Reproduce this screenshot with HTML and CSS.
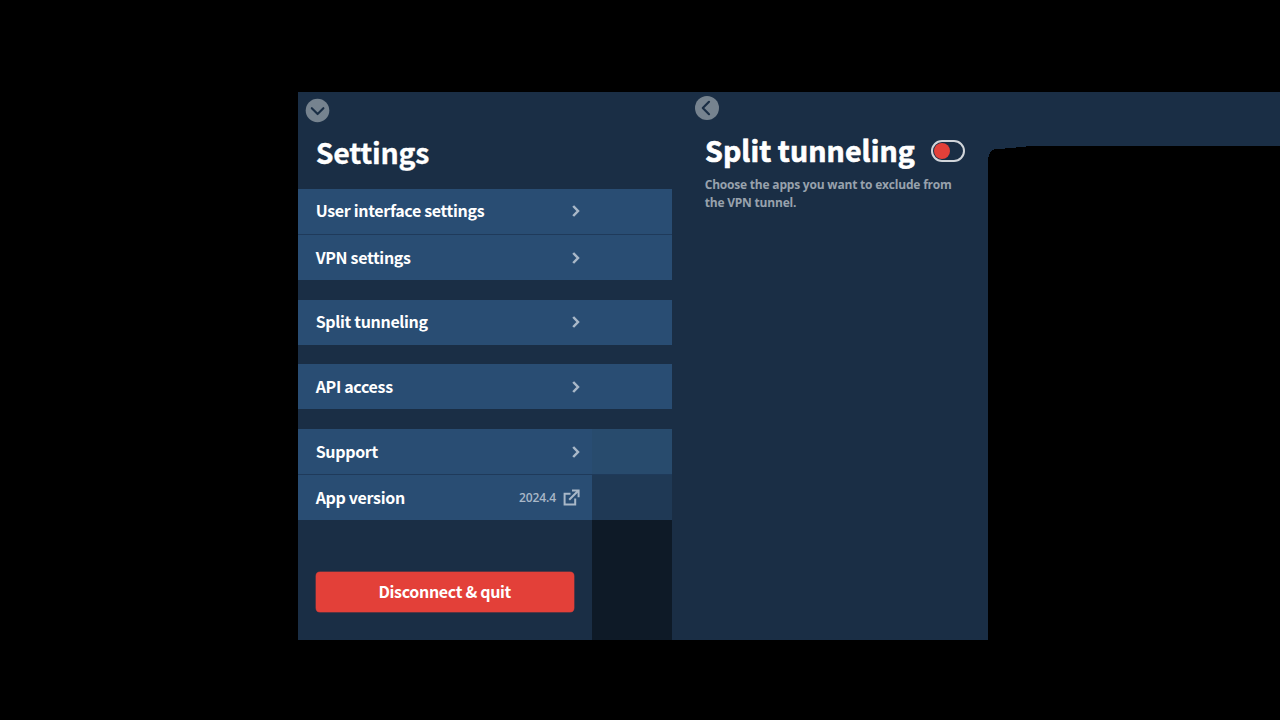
FILE: index.html
```html
<!DOCTYPE html>
<html lang="en">
<head>
<meta charset="utf-8">
<title>Settings</title>
<link rel="stylesheet" href="styles.css">
</head>
<body>
<main class="stage">
  <section class="settings">
    <header class="settings-header">
      <svg class="round-icon" width="25" height="25" viewBox="0 0 25 25"><circle cx="12.5" cy="12.5" r="11.8" fill="#76838f"/><path d="M6.8 10.2 12.6 16.1 18.4 10.2" fill="none" stroke="#1a2e45" stroke-width="2.1" stroke-linecap="round" stroke-linejoin="round"/></svg>
      <h1 class="title">Settings</h1>
    </header>
    <nav class="menu">
      <div class="group">
        <div class="row row-raised"><span class="label">User interface settings</span><svg class="chevron" viewBox="0 0 8 12"><path d="M1.2 1 6 6 1.2 11"/></svg></div>
        <div class="row"><span class="label">VPN settings</span><svg class="chevron" viewBox="0 0 8 12"><path d="M1.2 1 6 6 1.2 11"/></svg></div>
      </div>
      <div class="group">
        <div class="row row-raised"><span class="label">Split tunneling</span><svg class="chevron" viewBox="0 0 8 12"><path d="M1.2 1 6 6 1.2 11"/></svg></div>
      </div>
      <div class="group">
        <div class="row"><span class="label">API access</span><svg class="chevron" viewBox="0 0 8 12"><path d="M1.2 1 6 6 1.2 11"/></svg></div>
      </div>
      <div class="group">
        <div class="row row-support"><span class="label">Support</span><svg class="chevron" viewBox="0 0 8 12"><path d="M1.2 1 6 6 1.2 11"/></svg></div>
        <div class="row row-version"><span class="label">App version</span><span class="version">2024.4</span><svg class="external" width="17" height="17" viewBox="0 0 17 17"><path d="M7.5 4.7H1.6V15.4H12.2V9.5M6.2 10.8 14.2 2.8" fill="none" stroke="#a9b8c8" stroke-width="2"/><path d="M9 0.6H16.6V8.2H14.6V4L13 2.6H9Z" fill="#a9b8c8"/></svg></div>
      </div>
    </nav>
    <footer class="footer"><button class="quit">Disconnect &amp; quit</button></footer>
  </section>
  <section class="split">
    <svg class="round-icon" width="24" height="24" viewBox="0 0 24 24"><circle cx="12" cy="12" r="12" fill="#76838f"/><path d="M14 5.8 7.8 12 14 18.2" fill="none" stroke="#1a2e45" stroke-width="2.2" stroke-linecap="round" stroke-linejoin="round"/></svg>
    <div class="split-heading"><h2 class="title title-split">Split tunneling</h2><span class="toggle"><span class="knob"></span></span></div>
    <p class="description">Choose the apps you want to exclude from<br>the VPN tunnel.</p>
  </section>
  <svg class="band" width="292" height="70" viewBox="0 0 292 70"><path d="M0 0H292V54H38V55H28V56H17V57H6V58H4V59H3V60H2V62H1V65H0Z" fill="#1a2e45" shape-rendering="crispEdges"/></svg>
</main>
</body>
</html>
```
FILE: styles.css
```css
* { box-sizing: border-box; }
body { margin: 0; background: #000; color: #fff; font-family: "Noto Sans CJK SC", "Noto Sans", sans-serif; overflow: hidden; }
.stage { display: flex; width: 1280px; height: 720px; padding: 92px 0 80px 298px; }
.settings { display: flex; flex-direction: column; flex: none; width: 374px; height: 548px; background: #1a2e45; }
.settings-header { height: 97px; padding: 6px 0 0 7px; }
.round-icon { display: block; }
.title { margin: 6px 0 0 10.7px; font-size: 28.5px; line-height: 46px; font-weight: 700; letter-spacing: -0.25px; white-space: nowrap; -webkit-text-stroke: 0.3px #fff; }
.menu { display: flex; flex-direction: column; gap: 20px; height: 331px; }
.group { display: flex; flex-direction: column; gap: 1px; background: #1f3a5a; }
.group:nth-child(3) { margin-top: -1px; }
.row { display: flex; align-items: center; height: 45px; padding: 0 92px 0 17.7px; background: #294d73; }
.row-raised { padding-bottom: 1px; }
.row-support { background: linear-gradient(90deg, #294d73 294px, #284b6d 294px); }
.row-version { background: linear-gradient(90deg, #294d73 294px, #1f3955 294px); }
.label { flex: 1; padding-bottom: 1px; font-size: 16px; line-height: 24px; font-weight: 700; letter-spacing: -0.33px; }
.row-raised .label { padding-bottom: 2px; }
.chevron { width: 8px; height: 12px; }
.chevron path { fill: none; stroke: #a9b8c8; stroke-width: 2.5; }
.version { margin-right: 7px; padding-top: 1px; font: 600 12px/18px "Open Sans", sans-serif; letter-spacing: -0.1px; color: #a9b8c8; }
.external { flex: none; }
.footer { flex: 1; padding: 52px 0 0 18px; background: linear-gradient(90deg, #1a2e45 294px, #0e1a27 294px); }
.quit { display: block; width: 257.5px; height: 40px; padding: 0 0 2px; border: 0; border-radius: 4px; background: #e34039; color: #fff; font: 700 16px/38px "Noto Sans CJK SC", sans-serif; letter-spacing: -0.33px; box-shadow: 0 0 0 0.5px #a03a3e; }
.split { flex: none; width: 316px; height: 548px; padding: 4px 0 0 23px; background: #1a2e45; }
.split-heading { display: flex; align-items: center; height: 46px; margin: 8px 0 0 10px; }
.title-split { width: 226px; margin: -3px 0 0; letter-spacing: 0.1px; -webkit-text-stroke: 0.7px #fff; }
.toggle { width: 34px; height: 22px; padding: 2px; border: 2px solid #d1d5da; border-radius: 11px; }
.knob { display: block; width: 16px; height: 16px; margin: -1px 0 0 -1px; border-radius: 50%; background: #e34039; }
.description { margin: 2px 0 0 9.7px; font: 700 12px/18px "Open Sans", sans-serif; letter-spacing: -0.2px; color: #98a2ad; white-space: nowrap; }
.band { display: block; flex: none; }
```
